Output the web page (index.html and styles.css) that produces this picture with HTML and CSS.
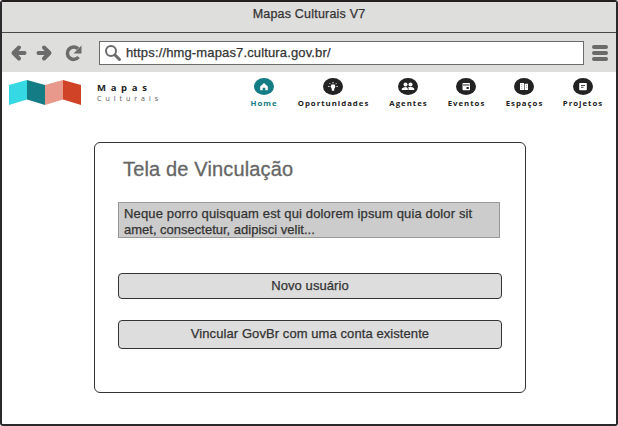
FILE: index.html
```html
<!DOCTYPE html>
<html lang="pt-BR">
<head>
<meta charset="utf-8">
<title>Mapas Culturais V7</title>
<link rel="stylesheet" href="styles.css">
</head>
<body>
<div class="window">
  <header class="titlebar"><span class="window-title">Mapas Culturais V7</span></header>
  <div class="toolbar">
    <svg class="arrows" width="75" height="20" viewBox="0 0 75 20" fill="none" stroke="#6b6b6b" stroke-width="4" stroke-linecap="round" stroke-linejoin="round">
      <path d="M11 4.500 5.500 10l5.500 5.500M6 10h10.500M36 4.500l5.500 5.500-5.500 5.500M41 10H30.500"/>
      <path d="M70.500 14A6.200 6.200 0 1 1 70 5.800" stroke-width="3.500" stroke-linecap="butt"/>
      <path d="M73.500 2.500v8h-8z" fill="#6b6b6b" stroke="none"/>
    </svg>
    <div class="address">
      <svg width="18" height="18" viewBox="0 0 18 18" fill="none" stroke="#6b6b6b"><circle cx="7" cy="7" r="5" stroke-width="2"/><path d="M11 11l4.500 4.500" stroke-width="3" stroke-linecap="round"/></svg>
      <span class="url">https://hmg-mapas7.cultura.gov.br/</span>
    </div>
    <div class="menu"><i></i><i></i><i></i></div>
  </div>
  <div class="site-header">
    <svg class="logo" width="72" height="26" viewBox="0 0 72 26"><path fill="#35d9e3" d="M0 5 18 0v19.500L0 25z"/><path fill="#147c84" d="M18 0l18 5v20l-18-5.500z"/><path fill="#e8998b" d="M36 5 54 0v19.500L36 25z"/><path fill="#d14327" d="M54 0l18 5v20l-18-5.500z"/></svg>
    <div class="brand"><b>Mapas</b><span>Culturais</span></div>
    <nav class="nav">
      <a class="active home"><svg viewBox="0 0 20 17"><ellipse cx="10" cy="8.500" rx="10" ry="8.500" fill="currentColor"/><path fill="#fff" d="M10 5 6.200 8.500v3.700h2.500V9.700h2.600v2.500h2.500V8.500z"/></svg><span>Home</span></a>
      <a class="opp"><svg viewBox="0 0 20 17"><ellipse cx="10" cy="8.500" rx="10" ry="8.500" fill="currentColor"/><circle cx="10" cy="8.500" r="2.300" fill="#fff"/><path fill="#fff" d="M8.800 10h2.400v2.800H8.800z"/><path stroke="#fff" stroke-width=".9" d="M10 4v1.300M5.200 8.500h1.400M13.400 8.500h1.400M6.500 5.200l1 1M13.500 5.200l-1 1"/></svg><span>Oportunidades</span></a>
      <a class="agents"><svg viewBox="0 0 20 17"><ellipse cx="10" cy="8.500" rx="10" ry="8.500" fill="currentColor"/><g fill="#fff"><circle cx="7.500" cy="6.500" r="2"/><circle cx="12.500" cy="6.500" r="2"/><path d="M3.800 12V10.500Q5.500 9 7.500 9t2.300 1.500V12zM10.500 12V10.500L10 9.300Q14.500 8.400 16.200 10.500V12z"/></g></svg><span>Agentes</span></a>
      <a class="events"><svg viewBox="0 0 20 17"><ellipse cx="10" cy="8.500" rx="10" ry="8.500" fill="currentColor"/><rect x="6.500" y="5" width="7.500" height="7.200" rx=".7" fill="#fff"/><path fill="#222" d="M7 6.500h6.500v.9H7zM10.500 9h2.300v2h-2.300z"/></svg><span>Eventos</span></a>
      <a class="spaces"><svg viewBox="0 0 20 17"><ellipse cx="10" cy="8.500" rx="10" ry="8.500" fill="currentColor"/><path fill="#fff" d="M6 5h4v7H6zM10.600 5.800H14V12h-3.400z"/><path stroke="#777" stroke-width=".6" stroke-dasharray="1 1" d="M7.800 6v5M12.500 7v4"/></svg><span>Espaços</span></a>
      <a class="projects"><svg viewBox="0 0 20 17"><ellipse cx="10" cy="8.500" rx="10" ry="8.500" fill="currentColor"/><rect x="6.200" y="5" width="7.600" height="7.300" rx=".7" fill="#fff"/><path stroke="#333" stroke-width=".9" d="M8 7.500h4M8 9.300h2.500"/></svg><span>Projetos</span></a>
    </nav>
  </div>
  <main class="panel">
    <h1><span class="heading">Tela de Vinculação</span></h1>
    <p class="note"><span class="line-one">Neque porro quisquam est qui dolorem ipsum quia dolor sit</span><br><span class="line-two">amet, consectetur, adipisci velit...</span></p>
    <button class="new-user"><span>Novo usuário</span></button>
    <button class="link-user"><span>Vincular GovBr com uma conta existente</span></button>
  </main>
</div>
</body>
</html>
```
FILE: styles.css
```css
* { box-sizing: border-box; }
body { margin: 0; background: #fff; font-family: "Liberation Sans", sans-serif; color: #333; }
.window { width: 618px; height: 426px; border: 2px solid #2b292b; border-top-color: #231f20; border-radius: 3px; background: #fff; overflow: hidden; }
.titlebar { height: 31px; background: #dededc; border-bottom: 1px solid #484848; text-align: center; font-size: 12.500px; line-height: 24px; }
.window-title, .url, .line-one, .line-two, button span { -webkit-text-stroke: .25px currentColor; white-space: nowrap; }
.window-title { letter-spacing: .2px; }
.toolbar { height: 39px; background: #dededc; display: flex; align-items: center; padding-left: 6px; }
.arrows { flex: none; margin-right: 16px; }
.address { width: 485px; height: 24px; border: 1px solid #6b6b6b; background: #fff; display: flex; align-items: center; padding-left: 4px; font-size: 13px; }
.url { margin-left: 4px; letter-spacing: .14px; }
.menu { width: 16px; margin-left: 8px; display: grid; gap: 2px; }
.menu i { height: 4px; border-radius: 2px; background: #6b6b6b; }
.site-header { height: 70px; display: flex; align-items: flex-start; padding: 6px 0 0 7px; }
.logo { margin-top: 2px; flex: none; }
.brand { margin: 4px 0 0 16px; width: 80px; font-family: "Open Sans", sans-serif; display: flex; flex-direction: column; color: #222; }
.brand b { font-size: 9.500px; line-height: 12px; letter-spacing: 4.700px; }
.brand span { font-size: 7px; line-height: 10px; letter-spacing: 4px; color: #555; }
.nav { margin-left: 73px; display: flex; gap: 20.500px; font-family: "Open Sans", sans-serif; font-size: 7.800px; font-weight: 700; line-height: 10px; letter-spacing: 1px; color: #222; }
.nav a { display: flex; flex-direction: column; align-items: center; gap: 2.500px; white-space: nowrap; }
.nav span { margin-right: -1px; }
.nav svg { width: 20px; height: 17px; }
.nav .active { color: #147c84; }
.home { width: 27px; } .opp { width: 71px; } .agents { width: 38px; } .events { width: 37px; } .spaces { width: 38px; } .projects { width: 38px; }
.panel { width: 432px; height: 251px; margin-left: 92px; border: 1px solid #333; border-radius: 6px; padding: 13px 23px 0; display: flex; flex-direction: column; align-items: flex-start; }
h1 { margin: 0 0 19px 5px; font-size: 20px; line-height: 27px; font-weight: 400; color: #666; white-space: nowrap; }
.heading { -webkit-text-stroke: .3px currentColor; letter-spacing: .15px; }
.note { margin: 0; width: 382px; height: 36px; border: 1px solid #999; background: #ccc; padding: 3px 5px; font-size: 13px; line-height: 16px; }
.line-one { letter-spacing: .14px; }
button { width: 384px; border: 1px solid #333; border-radius: 4px; background: #ddd; color: #333; padding: 0 0 2px; font: 13px "Liberation Sans", sans-serif; letter-spacing: .08px; }
.new-user { height: 26px; margin-top: 35px; }
.link-user { height: 29px; margin-top: 21px; }
```
